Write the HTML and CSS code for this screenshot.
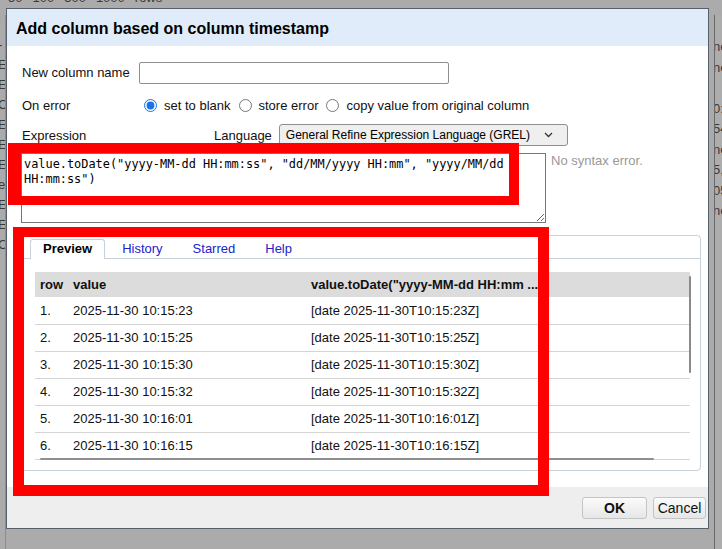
FILE: index.html
```html
<!DOCTYPE html>
<html lang="en">
<head>
    <meta charset="UTF-8">
    <meta name="viewport" content="width=device-width, initial-scale=1.0">
    <title>Add column based on column timestamp</title>
    <link rel="stylesheet" href="styles.css">
</head>
<body>
    <!-- project grid behind the modal -->
    <div class="page">
        <div class="pager"><span>50</span><span>100</span><span>500</span><span>1000</span><span>rows</span></div>
        <div class="page-cols">
            <div class="page-left">
                <div>'</div><div>-</div><div>E</div><div>E</div><div>O</div><div>E</div><div>E</div>
                <div>E</div><div>et</div><div>E</div><div>E</div><div>O</div>
            </div>
            <div class="page-right">
                <div>ne</div><div>ne</div><div>&nbsp;</div><div>0:</div><div>54</div>
                <div>ne</div><div>5,</div><div>05</div><div>ne</div>
            </div>
        </div>
    </div>

    <div class="dialog">
        <div class="dialog-header">Add column based on column timestamp</div>

        <div class="dialog-body">
            <div class="field-row row-name">
                <label class="field-label">New column name</label>
                <input type="text" class="text-input">
            </div>

            <div class="field-row row-error">
                <span class="field-label">On error</span>
                <input type="radio" name="on-error" class="radio first" checked><span>set to blank</span>
                <input type="radio" name="on-error" class="radio"><span>store error</span>
                <input type="radio" name="on-error" class="radio"><span>copy value from original column</span>
            </div>

            <div class="field-row row-expr">
                <span class="field-label">Expression</span>
                <span class="lang-label">Language</span>
                <div class="lang-select">
                    <span class="lang-value">General Refine Expression Language (GREL)</span>
                    <svg class="chevron" width="9" height="6" viewBox="0 0 9 6"><path d="M1 1l3.5 3.5L8 1" fill="none" stroke="#333" stroke-width="1.3"/></svg>
                </div>
            </div>

            <div class="expr-wrap">
                <textarea class="expr-input" spellcheck="false">value.toDate("yyyy-MM-dd HH:mm:ss", "dd/MM/yyyy HH:mm", "yyyy/MM/dd HH:mm:ss")</textarea>
                <div class="expr-status">No syntax error.</div>
            </div>

            <div class="tabs">
                <div class="tab-bar">
                    <span class="tab active">Preview</span>
                    <a class="tab">History</a>
                    <a class="tab">Starred</a>
                    <a class="tab">Help</a>
                </div>
                <div class="tab-panel">
                    <div class="preview">
                        <table class="preview-table">
                            <colgroup>
                                <col class="col-row"><col class="col-value"><col class="col-result"><col>
                            </colgroup>
                            <thead>
                                <tr><th>row</th><th>value</th><th>value.toDate("yyyy-MM-dd HH:mm ...</th><th></th></tr>
                            </thead>
                            <tbody id="preview-rows"></tbody>
                        </table>
                        <div class="vscroll"></div>
                        <div class="hscroll"></div>
                    </div>
                </div>
            </div>
        </div>

        <div class="dialog-footer">
            <button class="btn btn-ok">OK</button>
            <button class="btn">Cancel</button>
        </div>
    </div>

    <!-- highlight frames -->
    <div class="mark mark-expr"></div>
    <div class="mark mark-preview"></div>

<script>
    // --- DATA ---
    const stamps = ['10:15:23', '10:15:25', '10:15:30', '10:15:32', '10:16:01', '10:16:15'];

    // --- RENDER ---
    const tbody = document.getElementById('preview-rows');
    let html = '';
    stamps.forEach((t, i) => {
        html += `<tr><td>${i + 1}.</td><td>2025-11-30 ${t}</td><td>[date 2025-11-30T${t}Z]</td><td></td></tr>`;
    });
    tbody.innerHTML = html;
</script>
</body>
</html>
```

FILE: styles.css
```css
* {
    box-sizing: border-box;
}

body {
    margin: 0;
    width: 722px;
    height: 549px;
    overflow: hidden;
    position: relative;
    background-color: #ababab;
    font-family: "Liberation Sans", Arial, sans-serif;
    font-size: 13px;
    color: #111;
}

/* --- page behind the overlay --- */
.page {
    height: 100%;
    display: flex;
    flex-direction: column;
    color: #3a3a3a;
}

.pager {
    height: 4px;
    margin-top: -9px;
    padding-left: 8px;
    display: flex;
    gap: 10px;
    line-height: 13px;
}

.page-cols {
    flex: 1;
    display: flex;
    justify-content: space-between;
    padding-top: 20px;
}

.page-left {
    width: 6px;
    overflow: hidden;
    line-height: 20px;
    text-indent: -2px;
    border-right: 1px solid #8c8c8c;
}

.page-right {
    width: 8px;
    overflow: hidden;
    padding-top: 22px;
    line-height: 20.5px;
    text-indent: -2px;
    border-left: 1px solid #6a6a6a;
    background-color: #adadad;
}

/* --- dialog --- */
.dialog {
    position: absolute;
    left: 6px;
    top: 8px;
    width: 703px;
    height: 521px;
    border: 1px solid #56606b;
    background-color: #fff;
    display: flex;
    flex-direction: column;
}

.dialog-header {
    height: 37px;
    padding: 2px 0 0 9px;
    background-color: #e1ecfa;
    font-size: 16px;
    font-weight: bold;
    line-height: 35px;
    color: #000;
}

.dialog-body {
    flex: 1;
    padding: 10px 0 0 14px;
}

.field-row {
    display: flex;
    align-items: center;
}

.row-name { height: 33px; }
.row-error { height: 32px; }
.row-expr { height: 28px; }

.field-label {
    padding-left: 1px;
}

.row-name .field-label { width: 118px; }
.row-error .field-label { width: 123px; }
.row-expr .field-label { width: 193px; }

.text-input {
    width: 310px;
    height: 22px;
    margin: 0;
    border: 1px solid #8f8f8f;
    border-radius: 2px;
}

.radio {
    width: 13px;
    height: 13px;
    margin: 0 7px 0 8px;
    accent-color: #1a73e8;
}

.radio.first {
    margin-left: 0;
}

.lang-label {
    margin-right: 7px;
}

.lang-select {
    width: 289px;
    height: 22px;
    display: flex;
    align-items: center;
    justify-content: space-between;
    padding: 0 14px 0 6px;
    border: 1px solid #8f8f8f;
    border-radius: 3px;
    background-color: #efefef;
    color: #000;
}

.lang-value {
    white-space: nowrap;
    font-size: 12px;
}

.chevron {
    flex-shrink: 0;
}

.expr-wrap {
    display: flex;
    align-items: flex-start;
    margin-top: 4px;
}

.expr-input {
    width: 525px;
    height: 70px;
    margin: 0;
    padding: 3px 2px;
    border: 1px solid #767676;
    font-family: "DejaVu Sans Mono", "Liberation Mono", monospace;
    font-size: 11.9px;
    line-height: 15px;
    color: #000;
}

.expr-status {
    margin-left: 5px;
    line-height: 15px;
    color: #999;
}

/* --- preview tabs --- */
.tabs {
    width: 680px;
    height: 236px;
    margin-top: 12px;
    border: 1px solid #c8d0da;
    border-radius: 4px;
}

.tab-bar {
    height: 23px;
    display: flex;
    align-items: flex-end;
    padding-left: 8px;
    border-bottom: 1px solid #c8d0da;
}

.tab {
    height: 20px;
    margin: 0 4px -1px 0;
    padding: 0 12px;
    line-height: 17px;
    border: 1px solid transparent;
    border-bottom: none;
    border-radius: 3px 3px 0 0;
    color: #2222cc;
}

.tab.active {
    border-color: #c8d0da;
    background-color: #fff;
    color: #000;
    font-weight: bold;
}

.tab-panel {
    padding: 13px 0 0 13px;
}

.preview {
    position: relative;
    width: 658px;
    height: 190px;
    overflow: hidden;
}

.preview-table {
    width: 655px;
    border-collapse: collapse;
    table-layout: fixed;
}

.col-row { width: 33px; }
.col-value { width: 238px; }
.col-result { width: 238px; }

.preview-table th {
    height: 25px;
    padding: 0 5px;
    background-color: #dcdcdc;
    text-align: left;
    white-space: nowrap;
    overflow: hidden;
    font-weight: bold;
}

.preview-table td {
    height: 27px;
    padding: 0 5px;
    border-bottom: 1px solid #d4d4d4;
    font-size: 13px;
    white-space: nowrap;
}

.vscroll {
    position: absolute;
    left: 654px;
    top: 4px;
    width: 2px;
    height: 97px;
    border-radius: 1px;
    background-color: #8a8a8a;
}

.hscroll {
    position: absolute;
    left: 5px;
    top: 186px;
    width: 614px;
    height: 2px;
    border-radius: 1px;
    background-color: #8f8f8f;
}

/* --- footer --- */
.dialog-footer {
    height: 41px;
    display: flex;
    align-items: center;
    justify-content: flex-end;
    gap: 6px;
    padding-right: 2px;
    background-color: #eeeeee;
}

.btn {
    height: 22px;
    padding: 0;
    border: 1px solid #c4c4c4;
    border-radius: 3px;
    background: linear-gradient(#fbfbfb, #e6e6e6);
    font-family: "Liberation Sans", Arial, sans-serif;
    font-size: 14px;
    color: #111;
    width: 53px;
}

.btn-ok {
    width: 65px;
    font-weight: bold;
}

/* --- highlight frames --- */
.mark {
    position: absolute;
    border: 10px solid #ff0000;
}

.mark-expr {
    left: 8px;
    top: 143px;
    width: 511px;
    height: 62px;
    border-left-width: 13px;
    border-bottom-width: 9px;
}

.mark-preview {
    left: 13px;
    top: 227px;
    width: 536px;
    height: 269px;
    border-width: 10px 11px 11px 11px;
}
```
